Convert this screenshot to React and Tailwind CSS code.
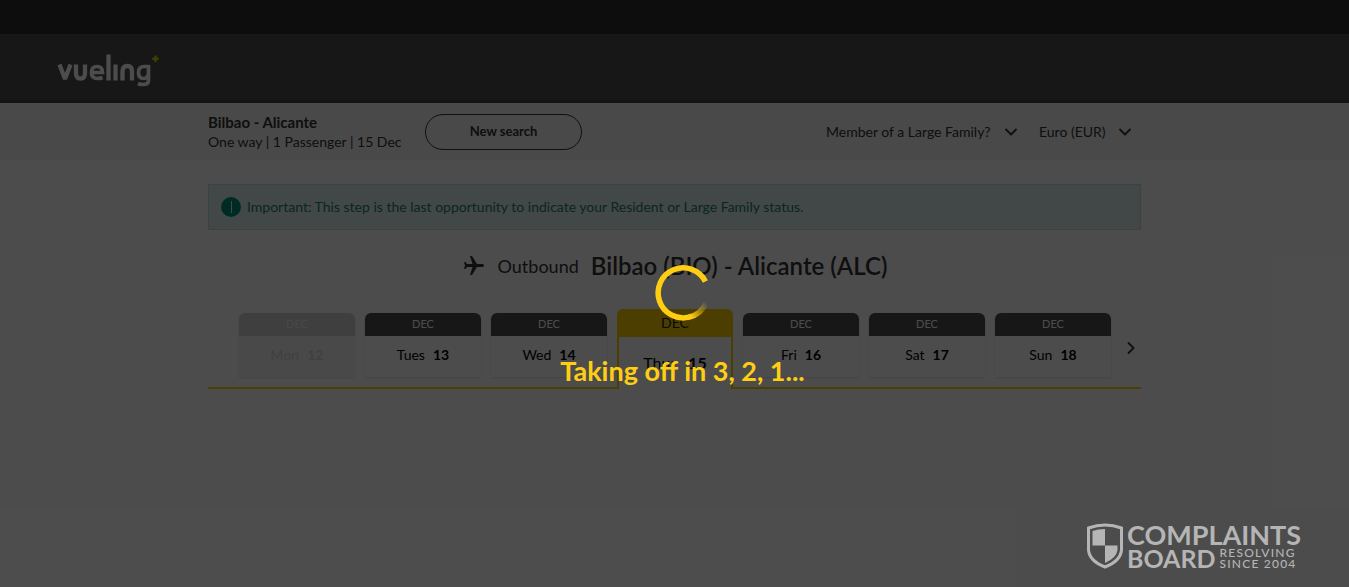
import { ChevronDown, ChevronRight } from "lucide-react";
import { MdFlight } from "react-icons/md";

const days = [
  { name: "Mon", date: 12, state: "disabled" },
  { name: "Tues", date: 13 },
  { name: "Wed", date: 14 },
  { name: "Thur", date: 15, state: "selected" },
  { name: "Fri", date: 16 },
  { name: "Sat", date: 17 },
  { name: "Sun", date: 18 },
];

function Logo() {
  return (
    <a href="#" aria-label="vueling" className="flex items-start text-[#fff]">
      <svg width="104" height="36" viewBox="0 0 104 36" fill="none" stroke="currentColor" strokeWidth="4.300" aria-hidden="true">
        <path d="M3.500 10.500 L9 25 L14.500 10.500" strokeLinejoin="bevel" />
        <path d="M20 10.500 V19 Q20 24.500 24.500 24.500 Q29 24.500 29 19 V10.500" />
        <path d="M35.500 18.500 H46.500 Q46.500 12.500 41 12.500 Q35.500 12.500 35.500 18.500 Q35.500 24.500 41.500 24.500 Q44.500 24.500 46.500 23.500" strokeWidth="3.700" />
        <path d="M52.500 0.500 V26.500" />
        <path d="M59.500 10.500 V26.500" />
        <path d="M66.500 26.500 V17.500 Q66.500 12 71.500 12 Q76 12 76 17.500 V26.500" />
        <path d="M93.500 12.500 H88.500 Q82.500 12.500 82.500 18.500 Q82.500 24.500 87.500 24.500 Q92.500 24.500 92.500 18.500 V11 V26.500 Q92.500 30.500 87 30.500 Q84 30.500 82 29.500" strokeWidth="3.700" />
        <path d="M99.500 1.500 V8 M96.200 4.800 H102.800" stroke="#cfd000" strokeWidth="2.500" />
      </svg>
    </a>
  );
}

function Dropdown({ id, label, text, width }) {
  return (
    <div className="relative flex items-center">
      <select id={id} aria-label={label} className={`appearance-none bg-transparent text-sm ${width}`}>
        <option>{text}</option>
      </select>
      <ChevronDown size={20} strokeWidth={2.2} className="pointer-events-none absolute right-0" />
    </div>
  );
}

function DayTab({ day }) {
  if (day.state === "selected") {
    return (
      <button role="tab" aria-selected="true" className="flex h-20 flex-1 flex-col rounded-t-md bg-[#ffcc00] text-[#222]">
        <span className="flex h-7 w-full items-center justify-center text-sm">DEC</span>
        <span className="flex w-full flex-1 items-center justify-center gap-3 border-x-2 border-[#ffcc00] bg-white text-base text-black">
          {day.name} <b>{day.date}</b>
        </span>
      </button>
    );
  }
  const off = day.state === "disabled";
  return (
    <button
      role="tab"
      aria-selected="false"
      disabled={off}
      className={`mb-3 flex h-16 flex-1 flex-col overflow-hidden rounded-t-md shadow ${off ? "bg-[#f3f3f3] text-[#d8d8d8]" : "bg-white text-black"}`}
    >
      <span className={`flex h-[23px] w-full items-center justify-center text-[11px] ${off ? "bg-[#d4d4d4] text-[#eee]" : "bg-[#4d4d4d] text-white"}`}>
        DEC
      </span>
      <span className="flex w-full flex-1 items-center justify-center gap-2 pb-1 text-sm">
        {day.name} <b>{day.date}</b>
      </span>
    </button>
  );
}

function Spinner() {
  return (
    <svg width="56" height="56" viewBox="0 0 56 56" fill="none" strokeWidth="5.500" aria-hidden="true">
      <defs>
        <linearGradient id="tail" gradientUnits="userSpaceOnUse" x1="36" y1="52" x2="53" y2="40">
          <stop offset="0" stopColor="#ffce13" />
          <stop offset="1" stopColor="#ffce13" stopOpacity="0" />
        </linearGradient>
      </defs>
      <path d="M50.400 16.500 A25 25 0 1 0 34 52.200" stroke="#ffce13" />
      <path d="M33.500 52.300 A25 25 0 0 0 51.500 37" stroke="url(#tail)" />
    </svg>
  );
}

function Watermark() {
  return (
    <div className="absolute right-12 bottom-[18px] flex items-center gap-1 text-[#b5b5b5]">
      <svg width="36" height="46" viewBox="0 0 36 46" aria-hidden="true">
        <path d="M1.500 5 Q18 -1 34.500 5 V27 Q33.500 38 18 44 Q2.500 38 1.500 27 Z" fill="none" stroke="currentColor" strokeWidth="3" />
        <path d="M18 6 V22.500 H5.500 V8 Q11 6 18 6 Z M18 22.500 H30.500 V27 Q29.500 35 18 40 Z" fill="currentColor" />
      </svg>
      <div>
        <p className="text-[27px] leading-6 font-bold">COMPLAINTS</p>
        <div className="flex items-center gap-1">
          <p className="text-[25px] leading-5 font-bold">BOARD</p>
          <p className="text-xs leading-[11px] font-medium tracking-widest">RESOLVING<br />SINCE 2004</p>
        </div>
      </div>
    </div>
  );
}

export default function App() {
  return (
    <div className="relative min-h-screen bg-white font-[Lato,sans-serif] text-[#333]">
      <div className="h-[34px] bg-[#2e2e2e]" />
      <header className="flex h-[69px] items-start border-b-3 border-[#444] bg-[#4d4d4d] px-14 pt-5">
        <Logo />
      </header>

      <section className="bg-[#f3f3f3]">
        <div className="mx-auto flex h-[57px] max-w-[933px] items-center gap-4">
          <div className="min-w-[201px] leading-[19px]">
            <p className="text-[15px] leading-[19px] font-bold">Bilbao - Alicante</p>
            <p className="text-sm leading-[19px]">One way | 1 Passenger | 15 Dec</p>
          </div>
          <button className="h-9 w-[157px] rounded-full border border-[#333] text-[13px] font-bold">New search</button>
          <div className="ml-auto flex gap-[18px] pr-1.5">
            <Dropdown id="family" label="Large family" text="Member of a Large Family?" width="w-[195px]" />
            <Dropdown id="currency" label="Currency" text="Euro (EUR)" width="w-24" />
          </div>
        </div>
      </section>

      <main className="mx-auto max-w-[933px] pt-6">
        <div role="status" className="flex h-[46px] items-center gap-1.5 border border-[#c6e2dc] bg-[#def0ed] px-3 text-sm text-[#26806f]">
          <span className="flex size-5 items-center justify-center rounded-full bg-[#00917a]">
            <span className="h-3 w-px bg-[#def0ed]" />
          </span>
          Important: This step is the last opportunity to indicate your Resident or Large Family status.
        </div>

        <h1 className="mt-5 flex h-8 items-center justify-center gap-3 text-2xl font-semibold">
          <MdFlight size={24} className="rotate-90" />
          <span className="text-lg font-normal">Outbound</span>
          Bilbao (BIO) - Alicante (ALC)
        </h1>

        <div className="mt-[27px] flex items-center border-b-2 border-[#ffcc00]">
          <div role="tablist" className="-mb-0.5 ml-[31px] flex flex-1 items-end gap-2.5">
            {days.map((day) => (
              <DayTab key={day.date} day={day} />
            ))}
          </div>
          <button aria-label="Next days" className="ml-2.5">
            <ChevronRight size={20} strokeWidth={2.2} />
          </button>
        </div>
      </main>

      <div className="absolute inset-0 flex flex-col items-center justify-center bg-black/70 pl-4">
        <div className="flex flex-col items-center gap-8 pt-[67px]">
          <Spinner />
          <p className="text-[27px] leading-9 font-bold text-[#ffce13]">Taking off in 3, 2, 1...</p>
        </div>
      </div>
      <Watermark />
    </div>
  );
}
